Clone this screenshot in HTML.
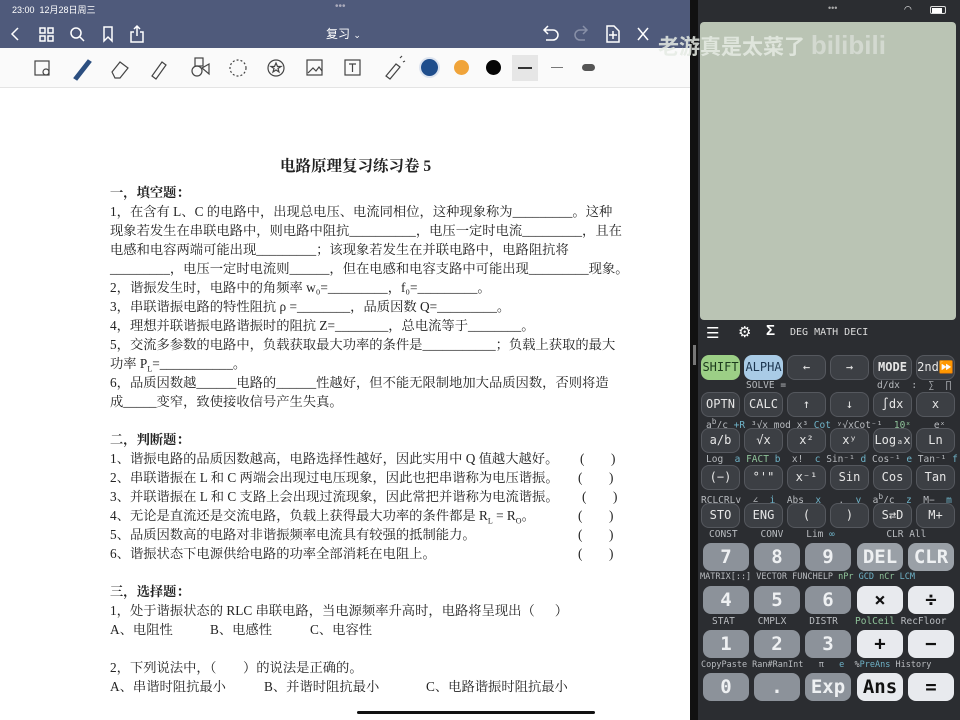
<!DOCTYPE html>
<html><head><meta charset="utf-8"><style>
*{margin:0;padding:0;box-sizing:border-box}
body{width:960px;height:720px;overflow:hidden;position:relative;background:#1e2024;font-family:"Liberation Sans","Noto Sans CJK SC",sans-serif}
.a{position:absolute}
#left{left:0;top:0;width:690px;height:720px;background:#fff}
#hdr{left:0;top:0;width:690px;height:48px;background:#4f5a7b;color:#fff}
#tb{left:0;top:48px;width:690px;height:40px;background:#fafafa;border-bottom:1px solid #e4e4e4}
.d{position:absolute;left:110px;font-family:"Liberation Serif","Noto Serif CJK SC",serif;font-size:13.3px;color:#222;white-space:nowrap;line-height:18px}
.b{font-weight:bold}
.p{position:absolute;font-family:"Liberation Serif","Noto Serif CJK SC",serif;font-size:13.3px;color:#222;line-height:18px;white-space:pre}
#right{left:698px;top:0;width:262px;height:720px;background:#2b2d31}
.k{position:absolute;width:39px;height:25px;border-radius:8px;background:#3c3f44;border:1px solid #55585e;color:#e6e6e6;font-family:"DejaVu Sans Mono","Liberation Mono",monospace;font-size:12px;text-align:center;line-height:23px}
.K{position:absolute;width:46px;height:28px;border-radius:8px;background:#8c929a;color:#eef0f2;font-family:"DejaVu Sans Mono",monospace;font-size:19px;font-weight:bold;text-align:center;line-height:28px}
.W{background:#e8eaee;color:#111}
.l{position:absolute;font-family:"DejaVu Sans Mono",monospace;font-size:9.5px;color:#b9bcc0;white-space:pre}
.g{color:#8fc39a}.c{color:#6fb3c8}
</style></head><body>
<div id="left" class="a">
<div id="hdr" class="a">
 <div class="a" style="left:12px;top:3px;font-size:9px">23:00&nbsp;&nbsp;12月28日周三</div>
 <div class="a" style="left:335px;top:1px;font-size:10px;color:#aab">•••</div>
 <svg class="a" style="left:0;top:22px" width="690" height="24" fill="none" stroke="#fff" stroke-width="1.5">
  <path d="M18 6l-6 6 6 6"/>
  <rect x="40" y="6" width="5" height="5"/><rect x="48" y="6" width="5" height="5"/><rect x="40" y="14" width="5" height="5"/><rect x="48" y="14" width="5" height="5"/>
  <circle cx="76" cy="11" r="5"/><path d="M80 15l4 4"/>
  <path d="M104 5h8v14l-4-4-4 4z"/>
  <path d="M134 10h-3v10h12V10h-3M137 14V4M134 7l3-3 3 3"/>
  <path d="M545 8h8a5 5 0 010 10h-7M548 4l-4 4 4 4"/>
  <path d="M586 8h-6a5 5 0 000 10h5M583 4l4 4-4 4" stroke="#8890a8"/>
  <path d="M607 4h7l5 5v11h-12zM613 9v8M609 13h8"/>
  <path d="M638 6l10 12M648 6l-10 12"/>
 </svg>
 <div class="a" style="left:326px;top:25px;font-size:12px">复习 <span style="font-size:9px">⌄</span></div>
</div>
<div id="tb" class="a">
 <svg class="a" style="left:0;top:0" width="690" height="40" fill="none" stroke="#444" stroke-width="1.2">
  <rect x="35" y="13" width="14" height="14"/><circle cx="46" cy="24" r="3"/>
  <path d="M74 30l14-18 3 2-14 18z" fill="#2c4f80" stroke="#2c4f80"/>
  <path d="M112 24l8-10 8 6-8 10h-5z"/>
  <path d="M152 28l10-14 4 3-10 14z"/>
  <rect x="195" y="10" width="8" height="8"/><circle cx="197" cy="23" r="5"/><path d="M202 20l7-4v10z"/>
  <circle cx="238" cy="20" r="8" stroke-dasharray="2 2"/>
  <circle cx="276" cy="20" r="8"/><path d="M276 15l1.5 3.5h3.5l-3 2 1 3.5-3-2-3 2 1-3.5-3-2h3.5z"/>
  <rect x="307" y="12" width="15" height="15"/><path d="M308 25l5-5 3 3 3-4 3 4"/>
  <rect x="345" y="12" width="15" height="15"/><path d="M349 16h7M352.5 16v8"/>
  <path d="M386 28l10-12 4 3-10 12zM400 10l2-2M403 14l2-1"/>
 </svg>
 <div class="a" style="left:421px;top:11px;width:17px;height:17px;border-radius:50%;background:#1f4e8c;box-shadow:0 0 0 2px #dde4ef"></div>
 <div class="a" style="left:454px;top:12px;width:15px;height:15px;border-radius:50%;background:#f0a43a"></div>
 <div class="a" style="left:486px;top:12px;width:15px;height:15px;border-radius:50%;background:#050505"></div>
 <div class="a" style="left:512px;top:7px;width:26px;height:26px;background:#e6e6e6"></div>
 <div class="a" style="left:518px;top:19px;width:14px;height:2px;background:#333"></div>
 <div class="a" style="left:551px;top:19px;width:12px;height:1px;background:#777"></div>
 <div class="a" style="left:582px;top:16px;width:13px;height:7px;border-radius:4px;background:#555"></div>
</div>

<div class="d b" style="left:280px;top:157px;font-size:15.5px;line-height:20px">电路原理复习练习卷 5</div>
<div class="d b" style="top:184px">一，填空题：</div>
<div class="d" style="top:203px">1，在含有 L、C 的电路中，出现总电压、电流同相位，这种现象称为_________。这种</div>
<div class="d" style="top:222px">现象若发生在串联电路中，则电路中阻抗__________，电压一定时电流_________，且在</div>
<div class="d" style="top:241px">电感和电容两端可能出现_________；该现象若发生在并联电路中，电路阻抗将</div>
<div class="d" style="top:260px">_________，电压一定时电流则______，但在电感和电容支路中可能出现_________现象。</div>
<div class="d" style="top:279px">2，谐振发生时，电路中的角频率 w₀=_________，f₀=_________。</div>
<div class="d" style="top:298px">3，串联谐振电路的特性阻抗 ρ =________，品质因数 Q=_________。</div>
<div class="d" style="top:317px">4，理想并联谐振电路谐振时的阻抗 Z=________，总电流等于________。</div>
<div class="d" style="top:336px">5，交流多参数的电路中，负载获取最大功率的条件是___________；负载上获取的最大</div>
<div class="d" style="top:355px">功率 P<sub style="font-size:8px">L</sub>=___________。</div>
<div class="d" style="top:374px">6，品质因数越______电路的______性越好，但不能无限制地加大品质因数，否则将造</div>
<div class="d" style="top:393px">成_____变窄，致使接收信号产生失真。</div>

<div class="d b" style="top:431px">二，判断题：</div>
<div class="d" style="top:450px">1、谐振电路的品质因数越高，电路选择性越好，因此实用中 Q 值越大越好。</div>
<div class="d" style="top:469px">2、串联谐振在 L 和 C 两端会出现过电压现象，因此也把串谐称为电压谐振。</div>
<div class="d" style="top:488px">3、并联谐振在 L 和 C 支路上会出现过流现象，因此常把并谐称为电流谐振。</div>
<div class="d" style="top:507px">4、无论是直流还是交流电路，负载上获得最大功率的条件都是 R<sub style="font-size:8px">L</sub> = R<sub style="font-size:8px">O</sub>。</div>
<div class="d" style="top:526px">5、品质因数高的电路对非谐振频率电流具有较强的抵制能力。</div>
<div class="d" style="top:545px">6、谐振状态下电源供给电路的功率全部消耗在电阻上。</div>
<div class="p" style="left:580px;top:450px">(        )</div>
<div class="p" style="left:578px;top:469px">(        )</div>
<div class="p" style="left:582px;top:488px">(        )</div>
<div class="p" style="left:578px;top:507px">(        )</div>
<div class="p" style="left:578px;top:526px">(        )</div>
<div class="p" style="left:578px;top:545px">(        )</div>

<div class="d b" style="top:583px">三，选择题：</div>
<div class="d" style="top:602px">1，处于谐振状态的 RLC 串联电路，当电源频率升高时，电路将呈现出（&nbsp;&nbsp;&nbsp;&nbsp;&nbsp;&nbsp;）</div>
<div class="d" style="top:621px">A、电阻性</div><div class="p" style="left:210px;top:621px">B、电感性</div><div class="p" style="left:310px;top:621px">C、电容性</div>
<div class="d" style="top:659px">2，下列说法中，（&nbsp;&nbsp;&nbsp;&nbsp;&nbsp;&nbsp;&nbsp;&nbsp;）的说法是正确的。</div>
<div class="d" style="top:678px">A、串谐时阻抗最小</div><div class="p" style="left:264px;top:678px">B、并谐时阻抗最小</div><div class="p" style="left:426px;top:678px">C、电路谐振时阻抗最小</div>
<div class="a" style="left:357px;top:711px;width:238px;height:3px;border-radius:2px;background:#111"></div>
</div>

<div class="a" style="left:690px;top:0;width:8px;height:720px;background:#111"></div>
<div id="right" class="a">
 <div class="a" style="left:130px;top:3px;font-size:9px;color:#aaa">•••</div>
 <div class="a" style="left:206px;top:4px;font-size:9px;color:#fff">◠</div>
 <div class="a" style="left:232px;top:6px;width:16px;height:8px;border:1px solid #ddd;border-radius:2px"><div style="width:10px;height:5px;background:#fff;margin:0.5px"></div></div>
 <div class="a" style="left:2px;top:22px;width:256px;height:298px;background:#bac4b4;border-radius:4px"></div>
 <div class="a" style="left:-40px;top:30px;font-size:21px;font-weight:bold;color:#e6ebe4;opacity:.85;white-space:nowrap">老游真是太菜了 <span style="font-family:'Liberation Sans';font-size:26px;color:#d8ddd6">bilibili</span></div>
 <div class="a" style="left:8px;top:324px;font-size:15px;color:#fff">☰</div>
 <div class="a" style="left:40px;top:323px;font-size:15px;color:#fff">⚙</div>
 <div class="a" style="left:68px;top:322px;font-size:15px;color:#fff;font-weight:bold">Σ</div>
 <div class="a" style="left:92px;top:327px;font-family:'DejaVu Sans Mono';font-size:10px;color:#ddd">DEG MATH DECI</div>
 <div class="a" style="left:-5px;top:345px;width:3px;height:20px;background:#777"></div>
</div>
<div class="k" style="left:701px;top:355px;background:#9ccf86;color:#1c3a1c;border-color:#9ccf86">SHIFT</div>
<div class="k" style="left:744px;top:355px;background:#a9cbe6;color:#1d3650;border-color:#a9cbe6">ALPHA</div>
<div class="k" style="left:787px;top:355px">←</div>
<div class="k" style="left:830px;top:355px">→</div>
<div class="k" style="left:873px;top:355px;font-weight:bold">MODE</div>
<div class="k" style="left:916px;top:355px">2nd<span style="color:#9cf">⏩</span></div>
<div class="l" style="left:746px;top:380px">SOLVE =</div><div class="l" style="left:877px;top:380px">d/dx  :  ∑  ∏</div>
<div class="k" style="left:701px;top:392px">OPTN</div><div class="k" style="left:744px;top:392px">CALC</div><div class="k" style="left:787px;top:392px">↑</div><div class="k" style="left:830px;top:392px">↓</div><div class="k" style="left:873px;top:392px">∫dx</div><div class="k" style="left:916px;top:392px">x</div>
<div class="l" style="left:706px;top:417px">a<sup>b</sup>/c <span class="c">+R</span> ³√x mod x³ <span class="c">Cot</span> ʸ√xCot⁻¹  <span class="g">10ˣ</span>    eˣ</div>
<div class="k" style="left:701px;top:428px">a/b</div><div class="k" style="left:744px;top:428px">√x</div><div class="k" style="left:787px;top:428px">x²</div><div class="k" style="left:830px;top:428px">xʸ</div><div class="k" style="left:873px;top:428px">Logₐx</div><div class="k" style="left:916px;top:428px">Ln</div>
<div class="l" style="left:706px;top:454px">Log  <span class="c">a</span> <span class="g">FACT</span> <span class="c">b</span>  x!  <span class="c">c</span> Sin⁻¹ <span class="c">d</span> Cos⁻¹ <span class="c">e</span> Tan⁻¹ <span class="c">f</span></div>
<div class="k" style="left:701px;top:465px">(−)</div><div class="k" style="left:744px;top:465px">°'"</div><div class="k" style="left:787px;top:465px">x⁻¹</div><div class="k" style="left:830px;top:465px">Sin</div><div class="k" style="left:873px;top:465px">Cos</div><div class="k" style="left:916px;top:465px">Tan</div>
<div class="l" style="left:701px;top:492px">RCLCRLv  ∠  <span class="c">i</span>  Abs  <span class="c">x</span>   ,  <span class="c">y</span>  a<sup>b</sup>/c  <span class="c">z</span>  M−  <span class="c">m</span></div>
<div class="k" style="left:701px;top:503px">STO</div><div class="k" style="left:744px;top:503px">ENG</div><div class="k" style="left:787px;top:503px">(</div><div class="k" style="left:830px;top:503px">)</div><div class="k" style="left:873px;top:503px">S⇄D</div><div class="k" style="left:916px;top:503px">M+</div>
<div class="l" style="left:709px;top:529px">CONST    CONV    Lim <span class="c">∞</span>         CLR All</div>
<div class="K" style="left:703px;top:543px">7</div><div class="K" style="left:754px;top:543px">8</div><div class="K" style="left:805px;top:543px">9</div><div class="K" style="left:857px;top:543px;background:#9aa0a7">DEL</div><div class="K" style="left:908px;top:543px;background:#9aa0a7">CLR</div>
<div class="l" style="left:700px;top:572px;font-size:8.5px">MATRIX[::] VECTOR FUNCHELP <span class="g">nPr</span> <span class="c">GCD</span> <span class="g">nCr</span> <span class="c">LCM</span></div>
<div class="K" style="left:703px;top:586px">4</div><div class="K" style="left:754px;top:586px">5</div><div class="K" style="left:805px;top:586px">6</div><div class="K W" style="left:857px;top:586px">×</div><div class="K W" style="left:908px;top:586px">÷</div>
<div class="l" style="left:712px;top:616px">STAT    CMPLX    DISTR   <span class="g">PolCeil</span> RecFloor</div>
<div class="K" style="left:703px;top:630px">1</div><div class="K" style="left:754px;top:630px">2</div><div class="K" style="left:805px;top:630px">3</div><div class="K W" style="left:857px;top:630px">+</div><div class="K W" style="left:908px;top:630px">−</div>
<div class="l" style="left:701px;top:660px;font-size:8.5px">CopyPaste Ran#RanInt   π   <span class="c">e</span>  %<span class="c">PreAns</span> History</div>
<div class="K" style="left:703px;top:673px">0</div><div class="K" style="left:754px;top:673px">.</div><div class="K" style="left:805px;top:673px">Exp</div><div class="K W" style="left:857px;top:673px">Ans</div><div class="K W" style="left:908px;top:673px">=</div>
</body></html>
